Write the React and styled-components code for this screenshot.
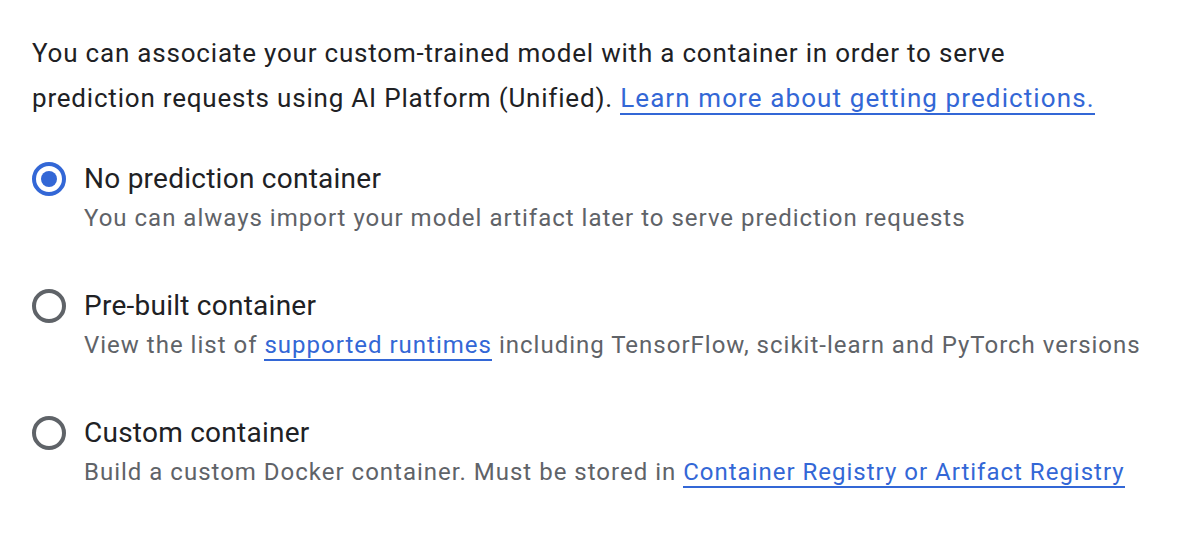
import React from 'react';
import styled, { createGlobalStyle } from 'styled-components';

const GlobalStyle = createGlobalStyle`
  body {
    margin: 0;
    background: #ffffff;
    font-family: Roboto, "Liberation Sans", sans-serif;
  }
`;

const Page = styled.div`
  width: 1200px;
  height: 560px;
  box-sizing: border-box;
  padding: 31px 32px 0 32px;
`;

const Intro = styled.p`
  margin: 0;
  font-size: 26px;
  line-height: 45px;
  letter-spacing: 0.8px;
  color: #202124;
  max-width: 1080px;
`;

const Link = styled.a`
  color: #3367d6;
  text-decoration: none;
  border-bottom: 2px solid #3367d6;
  cursor: pointer;
`;

const IntroLink = styled(Link)`
  letter-spacing: 1.1px;
`;

const OptionList = styled.div`
  display: flex;
  flex-direction: column;
  gap: 49px;
  margin-top: 39px;
`;

const Option = styled.label`
  display: flex;
  align-items: flex-start;
  gap: 18px;
  cursor: pointer;
`;

const Radio = styled.span`
  flex: none;
  width: 34px;
  height: 34px;
  box-sizing: border-box;
  margin-top: 2px;
  border-radius: 50%;
  border: 4px solid ${p => (p.checked ? '#3367d6' : '#5f6368')};
  display: flex;
  align-items: center;
  justify-content: center;
  &::after {
    content: '';
    width: 16px;
    height: 16px;
    border-radius: 50%;
    background: #3367d6;
    display: ${p => (p.checked ? 'block' : 'none')};
  }
`;

const OptionText = styled.div`
  display: flex;
  flex-direction: column;
`;

const Title = styled.div`
  font-size: 28px;
  line-height: 38px;
  letter-spacing: 0.25px;
  color: #202124;
`;

const Hint = styled.div`
  font-size: 24px;
  line-height: 40px;
  letter-spacing: 1px;
  color: #5f6368;
`;

const options = [
  {
    id: 'none',
    title: 'No prediction container',
    hint: <>You can always import your model artifact later to serve prediction requests</>,
    checked: true,
  },
  {
    id: 'prebuilt',
    title: 'Pre-built container',
    hint: (
      <>
        View the list of <Link>supported runtimes</Link> including TensorFlow, scikit-learn and PyTorch versions
      </>
    ),
  },
  {
    id: 'custom',
    title: 'Custom container',
    hint: (
      <>
        Build a custom Docker container. Must be stored in <Link>Container Registry or Artifact Registry</Link>
      </>
    ),
  },
];

const App = () => {
  return (
    <Page>
      <GlobalStyle />
      <Intro>
        You can associate your custom-trained model with a container in order to serve prediction
        requests using AI Platform (Unified). <IntroLink>Learn more about getting predictions.</IntroLink>
      </Intro>
      <OptionList>
        {options.map(opt => (
          <Option key={opt.id}>
            <Radio checked={opt.checked} />
            <OptionText>
              <Title>{opt.title}</Title>
              <Hint>{opt.hint}</Hint>
            </OptionText>
          </Option>
        ))}
      </OptionList>
    </Page>
  );
};

export default App;
